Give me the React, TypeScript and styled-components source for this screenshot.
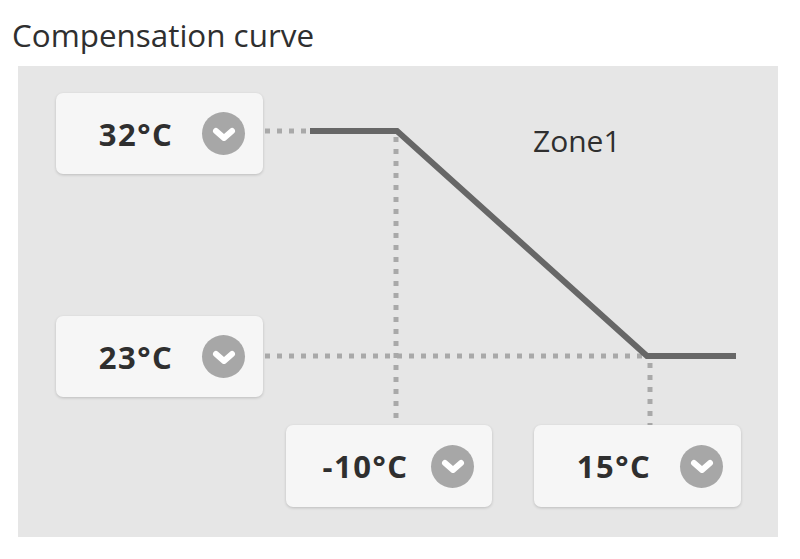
import React from "react";
import styled, { createGlobalStyle } from "styled-components";

const GlobalStyle = createGlobalStyle`
  html, body {
    margin: 0;
    padding: 0;
    background: #ffffff;
    font-family: "Open Sans", "Noto Sans", sans-serif;
  }
`;

const Page = styled.div`
  width: 800px;
  height: 559px;
  padding-top: 16px;
  box-sizing: border-box;
`;

const Title = styled.h1`
  margin: 0 0 12px 12px;
  font-size: 31.4px;
  font-weight: 400;
  line-height: 38px;
  color: #2f2f2f;
`;

// chart panel: the curve drawing sits under the setpoint cards in the same grid
const Panel = styled.div`
  margin-left: 18px;
  width: 760px;
  height: 471px;
  box-sizing: border-box;
  padding: 27px 37px 30px 38px;
  background: #e6e6e6;
  display: grid;
  grid-template-columns: 207px 23px 206px 42px 207px;
  grid-template-rows: 81px 142px 81px 28px 82px;
`;

const Curve = styled.svg`
  grid-area: 1 / 1 / -1 / -1;
  overflow: visible;
`;

const ZoneLabel = styled.div`
  grid-area: 1 / 4 / 2 / 6;
  padding: 29px 0 0 41px;
  font-size: 30px;
  line-height: 38px;
  color: #2f2f2f;
`;

const Card = styled.div<{ $row: number; $col: number }>`
  grid-row: ${(p) => p.$row};
  grid-column: ${(p) => p.$col};
  display: flex;
  align-items: center;
  padding: 0 18px 0 14px;
  background: #f6f6f6;
  border-radius: 7px;
  box-shadow: 0 1px 3px rgba(0, 0, 0, 0.18);
  z-index: 1;
`;

const Value = styled.span`
  flex: 1;
  text-align: center;
  font-size: 31px;
  font-weight: 700;
  color: #2f2f2f;
  letter-spacing: 1.5px;
`;

const DropButton = styled.div`
  width: 43px;
  height: 43px;
  border-radius: 50%;
  background: #a7a7a7;
  display: flex;
  align-items: center;
  justify-content: center;
`;

const Chevron = () => (
  <svg width="26" height="18" viewBox="0 0 26 18">
    <polyline
      points="5,6 13,13 21,6"
      fill="none"
      stroke="#ffffff"
      strokeWidth="6"
      strokeLinecap="round"
      strokeLinejoin="round"
    />
  </svg>
);

const Setpoint = ({ value, row, col }: { value: string; row: number; col: number }) => (
  <Card $row={row} $col={col}>
    <Value>{value}</Value>
    <DropButton>
      <Chevron />
    </DropButton>
  </Card>
);

const dots = { stroke: "#a9a9a9", strokeWidth: 5, strokeDasharray: "5 7", fill: "none" };

const App = () => (
  <>
    <GlobalStyle />
    <Page>
      <Title>Compensation curve</Title>
      <Panel>
        <Curve width="685" height="414" viewBox="0 0 685 414">
          <line x1="209" y1="38" x2="254" y2="38" {...dots} />
          <line x1="340" y1="44" x2="340" y2="332" {...dots} />
          <line x1="209" y1="263" x2="588" y2="263" {...dots} />
          <line x1="594" y1="270" x2="594" y2="332" {...dots} />
          <polyline
            points="254,38 341,38 591,263 680,263"
            fill="none"
            stroke="#676767"
            strokeWidth="6"
          />
        </Curve>
        <ZoneLabel>Zone1</ZoneLabel>
        <Setpoint value="32°C" row={1} col={1} />
        <Setpoint value="23°C" row={3} col={1} />
        <Setpoint value="-10°C" row={5} col={3} />
        <Setpoint value="15°C" row={5} col={5} />
      </Panel>
    </Page>
  </>
);

export default App;
